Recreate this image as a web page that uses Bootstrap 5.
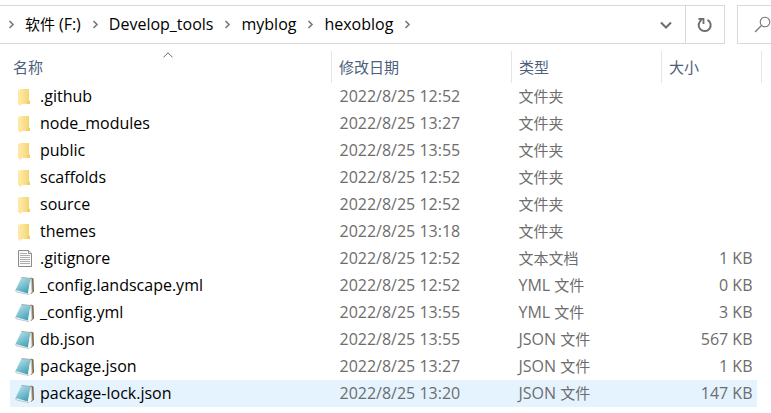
<!DOCTYPE html>
<html lang="zh-CN">
<head>
<meta charset="utf-8">
<meta name="viewport" content="width=device-width, initial-scale=1">
<title>hexoblog</title>
<link href="https://cdn.jsdelivr.net/npm/bootstrap@5.3.0/dist/css/bootstrap.min.css" rel="stylesheet">
<style>
body{font-family:"Open Sans","Noto Sans CJK SC",sans-serif;font-size:15px;line-height:27px;color:#000;background:#fff;overflow-x:hidden}
.topbar{padding-top:5px;gap:12px}
.address,.searchbox{border:1px solid #d9d9d9;height:39px}
.address{min-width:0}
.path{padding-left:8px;white-space:nowrap}
.path li{display:flex;align-items:center}
.path a{color:#000;margin:0 11px 0 10px}
.path svg,.path a{flex:none}
.bar-btn{border:0;background:none;padding:0;width:38px;display:flex;align-items:center;justify-content:center}
.reload{border-left:1px solid #d9d9d9;width:39px}
.searchbox{width:34px;border-right:0;padding-left:16px}
.searchbox input{width:0;border:0;padding:0;outline:0}
.files{table-layout:fixed;width:calc(100% - 19px);margin:7px 9px 0 10px}
.files th,.files td{padding:0 0 0 7px;height:27px;white-space:nowrap}
.files thead th{height:32px;border-right:1px solid #e5e5e5;font-weight:400;position:relative}
.files thead th:first-child{padding-left:3px}
.files thead button{border:0;background:none;padding:0;color:#4c607a}
.files .name{padding-left:5px}
.files td{color:#6d6d6d}
.name a{color:#000;font-size:16px;line-height:27px}
.name svg{width:20px;height:20px;margin-right:5px;flex:none}
.files .kb{text-align:right;padding-right:5px;font-size:16px}
.picked td:not(:last-child){background:#e5f3ff}
.w-date{width:180px}.w-type{width:150px}.w-size{width:96px}.w-edge{width:4px}
.files .when{padding-left:8px}
.when,.latin{font-size:16px}
.sort{position:absolute;left:calc(50% - 7px);top:1px}
</style>
<script src="https://cdn.jsdelivr.net/npm/bootstrap@5.3.0/dist/js/bootstrap.bundle.min.js"></script>
</head>
<body>
<svg class="position-absolute" width="0" height="0" aria-hidden="true">
  <defs>
    <linearGradient id="gold" x1="0" x2="1"><stop stop-color="#ffe9a8"/><stop offset="1" stop-color="#f5d26c"/></linearGradient>
    <linearGradient id="teal" x1="0" x2=".6" y1="0" y2="1"><stop stop-color="#c8e9ef"/><stop offset=".5" stop-color="#85c6d5"/><stop offset="1" stop-color="#48a3b9"/></linearGradient>
  </defs>
  <symbol id="chev" viewBox="0 0 7 9"><path d="M1.500 1 5 4.500 1.500 8" fill="none" stroke="#777" stroke-width="1.600"/></symbol>
  <symbol id="folder" viewBox="0 0 20 20"><path d="M5 2h9v12l1 1v2H5z" fill="url(#gold)"/><path d="M13 13l2 1v3h-3z" fill="#f3cd62"/><path d="M3 2l3 2.500V19l-3-2z" fill="#ffe8a1"/><path d="M6 4.500V18.500" stroke="#f9e3a0" stroke-width=".7"/></symbol>
  <symbol id="text" viewBox="0 0 20 20"><path d="M3.500 1.500h10l3 3v13h-13z" fill="#fafafa" stroke="#8b8b8b"/><path d="M13.500 1.500v3h3" fill="#eee" stroke="#8b8b8b"/><path d="M5 4.500h7M5 6.500h10M5 8.500h10M5 10.500h10M5 12.500h10M5 14.500h10" stroke="#a5a5a5" stroke-width=".9"/></symbol>
  <symbol id="note" viewBox="0 0 20 20"><path d="M15.500 1.500l3 1 .5 13-3 2.500-2-1z" fill="#74664f"/><path d="M15 2l2 1 .5 13-2.500 2z" fill="#c9c2af"/><path d="M.5 14.500l1 1.500 12 2.500 2-1.500V3z" fill="#edf4f5" stroke="#9aadb1" stroke-width=".6"/><path d="M6.500 1.500l9 1-2.500 15L.5 14z" fill="url(#teal)"/><path d="M6.500 1.500l9 1" stroke="#9eaeb0" stroke-width="1.200"/><path d="M15.500 3l-2.500 14.500 2.500 .5 1-2z" fill="#f4f8f8"/></symbol>
</svg>

<header class="topbar d-flex">
  <div class="address d-flex flex-grow-1 border-start-0">
    <nav class="d-flex flex-grow-1 align-items-center" aria-label="路径">
      <ol class="path d-flex list-unstyled mb-0">
        <li><svg width="7" height="9"><use href="#chev"/></svg><a class="text-decoration-none" href="#f">软件 <span class="latin">(F:)</span></a></li>
        <li><svg width="7" height="9"><use href="#chev"/></svg><a class="latin text-decoration-none" href="#tools">Develop_tools</a></li>
        <li><svg width="7" height="9"><use href="#chev"/></svg><a class="latin text-decoration-none" href="#myblog">myblog</a></li>
        <li><svg width="7" height="9"><use href="#chev"/></svg><a class="latin text-decoration-none" href="#hexoblog">hexoblog</a><svg width="7" height="9"><use href="#chev"/></svg></li>
      </ol>
    </nav>
    <button class="bar-btn" type="button" aria-label="历史记录"><svg width="12" height="8" viewBox="0 0 12 8"><path d="M1 1.500l5 5 5-5" fill="none" stroke="#6e6e6e" stroke-width="2"/></svg></button>
    <button class="bar-btn reload" type="button" aria-label="刷新"><svg width="16" height="16" viewBox="0 0 16 16"><path d="M10.500 2.800A6 6 0 1 1 4.500 3" fill="none" stroke="#6e6e6e" stroke-width="2"/><path d="M1.500 2h5v5" fill="none" stroke="#6e6e6e" stroke-width="1.800"/></svg></button>
  </div>
  <label class="searchbox d-flex align-items-center flex-shrink-0"><svg class="flex-shrink-0" width="17" height="17" viewBox="0 0 17 17"><circle cx="11" cy="6" r="4.800" fill="none" stroke="#777" stroke-width="1.100"/><path d="M7.500 9.500L1 16" stroke="#777" stroke-width="1.300"/></svg><input type="search" aria-label="搜索"></label>
</header>

<main>
<table class="files">
  <colgroup><col><col class="w-date"><col class="w-type"><col class="w-size"><col class="w-edge"></colgroup>
  <thead>
    <tr>
      <th aria-sort="ascending"><svg class="sort" width="10" height="6" viewBox="0 0 10 6"><path d="M.5 5.300L5 .8l4.500 4.500" fill="none" stroke="#666"/></svg><button type="button">名称</button></th>
      <th><button type="button">修改日期</button></th>
      <th><button type="button">类型</button></th>
      <th colspan="2"><button type="button">大小</button></th>
    </tr>
  </thead>
  <tbody>
    <tr><td class="name"><div class="d-flex align-items-center"><svg><use href="#folder"/></svg><a class="text-decoration-none" href="#1">.github</a></div></td><td class="when">2022/8/25 12:52</td><td>文件夹</td><td class="kb"></td><td></td></tr>
    <tr><td class="name"><div class="d-flex align-items-center"><svg><use href="#folder"/></svg><a class="text-decoration-none" href="#2">node_modules</a></div></td><td class="when">2022/8/25 13:27</td><td>文件夹</td><td class="kb"></td><td></td></tr>
    <tr><td class="name"><div class="d-flex align-items-center"><svg><use href="#folder"/></svg><a class="text-decoration-none" href="#3">public</a></div></td><td class="when">2022/8/25 13:55</td><td>文件夹</td><td class="kb"></td><td></td></tr>
    <tr><td class="name"><div class="d-flex align-items-center"><svg><use href="#folder"/></svg><a class="text-decoration-none" href="#4">scaffolds</a></div></td><td class="when">2022/8/25 12:52</td><td>文件夹</td><td class="kb"></td><td></td></tr>
    <tr><td class="name"><div class="d-flex align-items-center"><svg><use href="#folder"/></svg><a class="text-decoration-none" href="#5">source</a></div></td><td class="when">2022/8/25 12:52</td><td>文件夹</td><td class="kb"></td><td></td></tr>
    <tr><td class="name"><div class="d-flex align-items-center"><svg><use href="#folder"/></svg><a class="text-decoration-none" href="#6">themes</a></div></td><td class="when">2022/8/25 13:18</td><td>文件夹</td><td class="kb"></td><td></td></tr>
    <tr><td class="name"><div class="d-flex align-items-center"><svg><use href="#text"/></svg><a class="text-decoration-none" href="#7">.gitignore</a></div></td><td class="when">2022/8/25 12:52</td><td>文本文档</td><td class="kb">1 KB</td><td></td></tr>
    <tr><td class="name"><div class="d-flex align-items-center"><svg><use href="#note"/></svg><a class="text-decoration-none" href="#8">_config.landscape.yml</a></div></td><td class="when">2022/8/25 12:52</td><td><span class="latin">YML </span>文件</td><td class="kb">0 KB</td><td></td></tr>
    <tr><td class="name"><div class="d-flex align-items-center"><svg><use href="#note"/></svg><a class="text-decoration-none" href="#9">_config.yml</a></div></td><td class="when">2022/8/25 13:55</td><td><span class="latin">YML </span>文件</td><td class="kb">3 KB</td><td></td></tr>
    <tr><td class="name"><div class="d-flex align-items-center"><svg><use href="#note"/></svg><a class="text-decoration-none" href="#10">db.json</a></div></td><td class="when">2022/8/25 13:55</td><td><span class="latin">JSON </span>文件</td><td class="kb">567 KB</td><td></td></tr>
    <tr><td class="name"><div class="d-flex align-items-center"><svg><use href="#note"/></svg><a class="text-decoration-none" href="#11">package.json</a></div></td><td class="when">2022/8/25 13:27</td><td><span class="latin">JSON </span>文件</td><td class="kb">1 KB</td><td></td></tr>
    <tr class="picked"><td class="name"><div class="d-flex align-items-center"><svg><use href="#note"/></svg><a class="text-decoration-none" href="#12">package-lock.json</a></div></td><td class="when">2022/8/25 13:20</td><td><span class="latin">JSON </span>文件</td><td class="kb">147 KB</td><td></td></tr>
  </tbody>
</table>
</main>
</body>
</html>
